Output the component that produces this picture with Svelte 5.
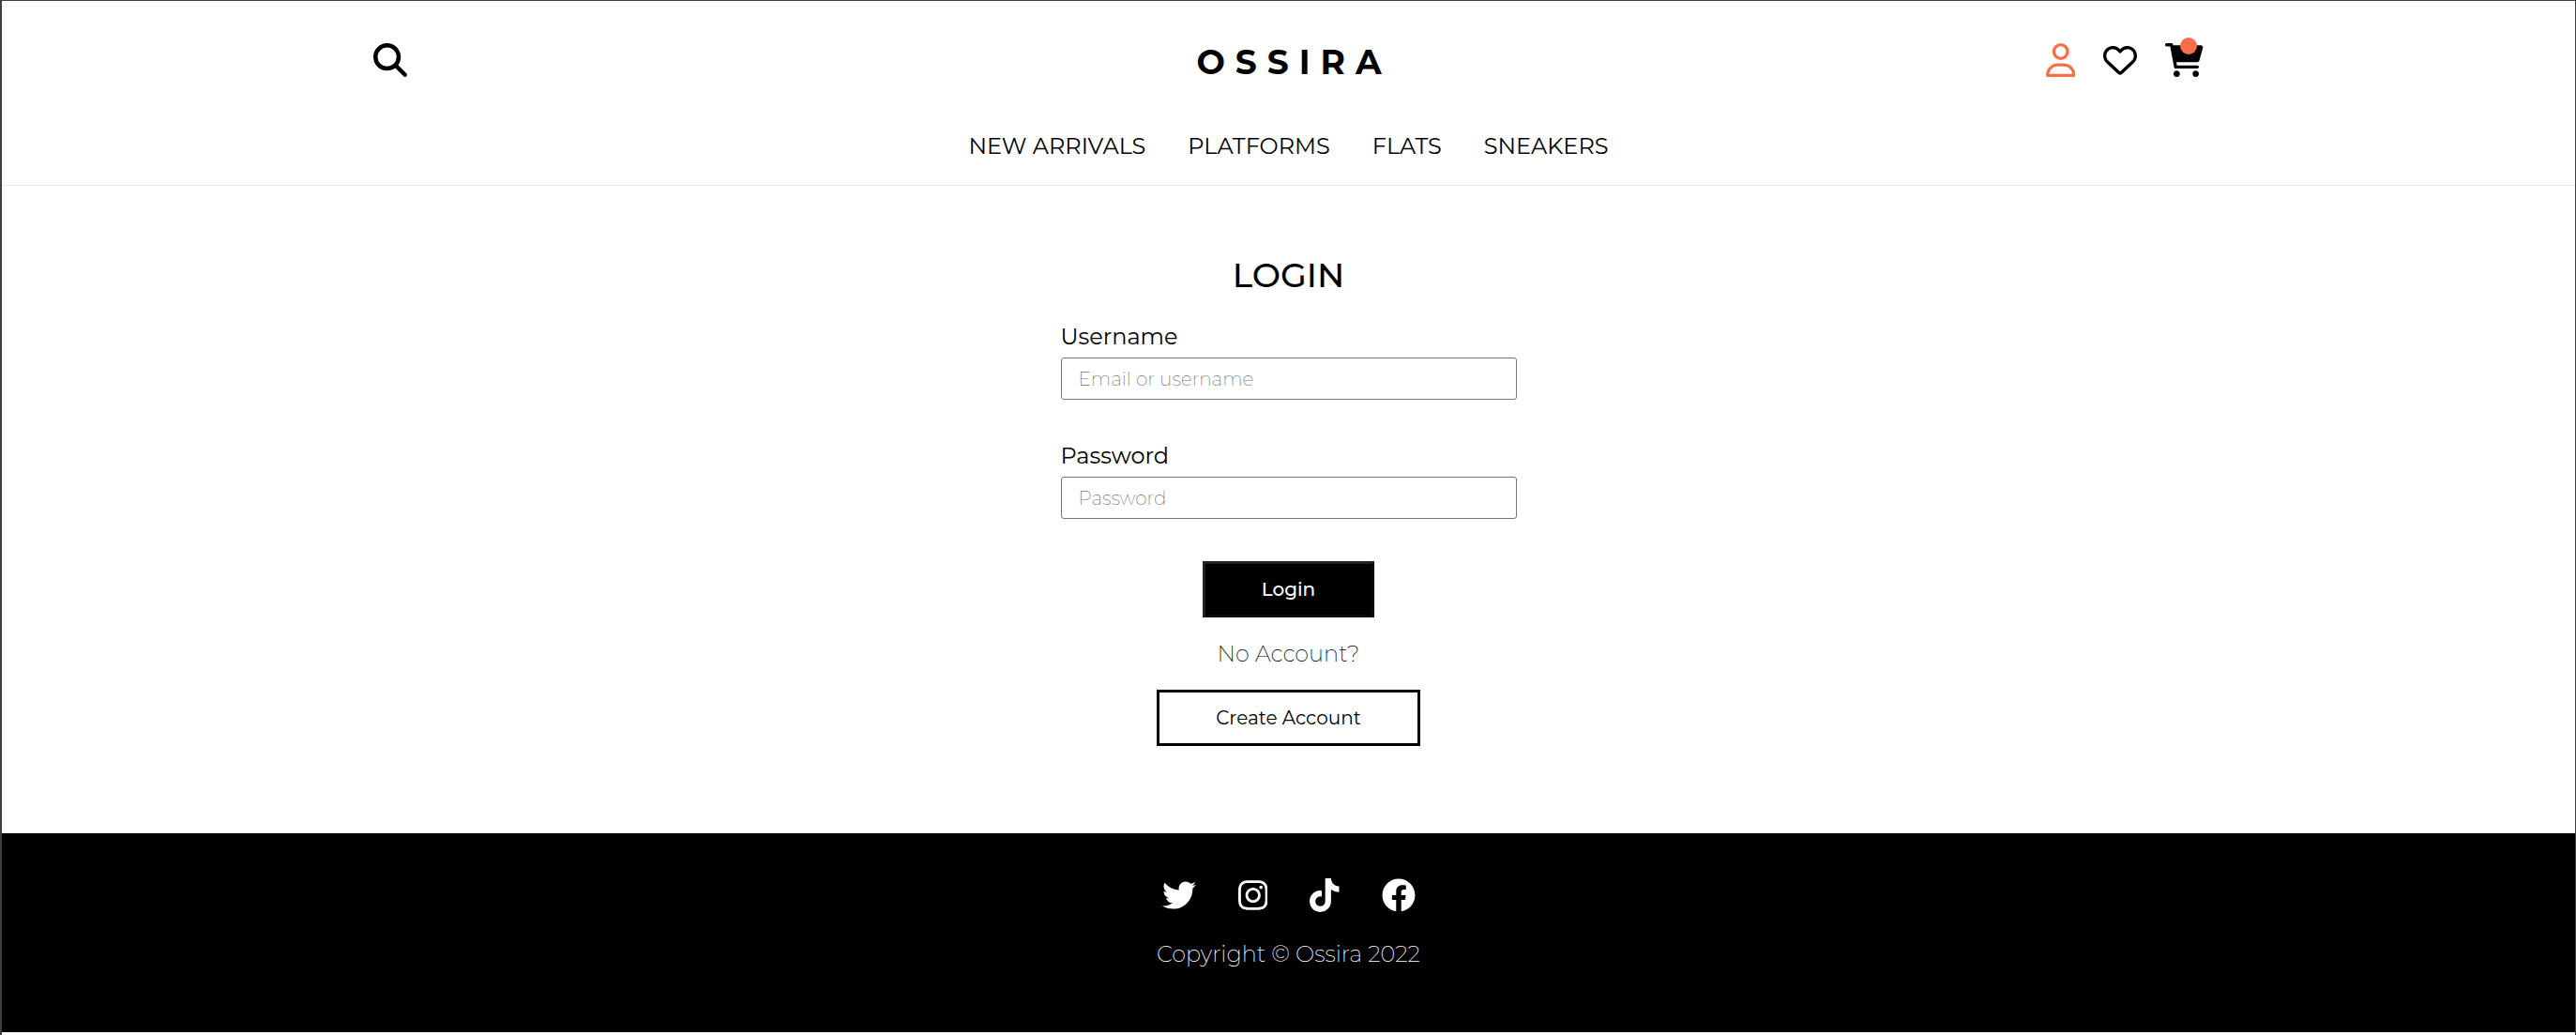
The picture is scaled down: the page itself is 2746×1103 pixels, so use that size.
<script>
  const links = ['NEW ARRIVALS', 'PLATFORMS', 'FLATS', 'SNEAKERS'];

  const socials = [
    {
      name: 'Twitter',
      box: '0 0 512 512',
      path: 'M459.37 151.716c.325 4.548.325 9.097.325 13.645 0 138.72-105.583 298.558-298.558 298.558-59.452 0-114.68-17.219-161.137-47.106 8.447.974 16.568 1.299 25.34 1.299 49.055 0 94.213-16.568 130.274-44.832-46.132-.975-84.792-31.188-98.112-72.772 6.498.974 12.995 1.624 19.818 1.624 9.421 0 18.843-1.3 27.614-3.573-48.081-9.747-84.143-51.98-84.143-102.985v-1.299c13.969 7.797 30.214 12.67 47.431 13.319-28.264-18.843-46.781-51.005-46.781-87.391 0-19.492 5.197-37.36 14.294-52.954 51.655 63.675 129.3 105.258 216.365 109.807-1.624-7.797-2.599-15.918-2.599-24.04 0-57.828 46.782-104.934 104.934-104.934 30.213 0 57.502 12.67 76.67 33.137 23.715-4.548 46.456-13.32 66.599-25.34-7.798 24.366-24.366 44.833-46.132 57.827 21.117-2.273 41.584-8.122 60.426-16.243-14.292 20.791-32.161 39.308-52.628 54.253z'
    },
    {
      name: 'Instagram',
      box: '0 0 448 512',
      path: 'M224.1 141c-63.6 0-114.9 51.3-114.9 114.9s51.3 114.9 114.9 114.9S339 319.5 339 255.9 287.7 141 224.1 141zm0 189.6c-41.1 0-74.7-33.5-74.7-74.7s33.5-74.7 74.7-74.7 74.7 33.5 74.7 74.7-33.6 74.7-74.7 74.7zm146.4-194.3c0 14.9-12 26.8-26.8 26.8-14.9 0-26.8-12-26.8-26.8s12-26.8 26.8-26.8 26.8 12 26.8 26.8zm76.1 27.2c-1.7-35.9-9.9-67.7-36.2-93.9-26.2-26.2-58-34.4-93.9-36.2-37-2.1-147.9-2.1-184.9 0-35.8 1.7-67.6 9.9-93.9 36.1s-34.4 58-36.2 93.9c-2.1 37-2.1 147.9 0 184.9 1.7 35.9 9.9 67.7 36.2 93.9s58 34.4 93.9 36.2c37 2.1 147.9 2.1 184.9 0 35.9-1.7 67.7-9.9 93.9-36.2 26.2-26.2 34.4-58 36.2-93.9 2.1-37 2.1-147.8 0-184.8zM398.8 388c-7.8 19.6-22.9 34.7-42.6 42.6-29.5 11.7-99.5 9-132.1 9s-102.7 2.6-132.1-9c-19.6-7.8-34.7-22.9-42.6-42.6-11.7-29.5-9-99.5-9-132.1s-2.6-102.7 9-132.1c7.8-19.6 22.9-34.7 42.6-42.6 29.5-11.7 99.5-9 132.1-9s102.7-2.6 132.1 9c19.6 7.8 34.7 22.9 42.6 42.6 11.7 29.5 9 99.5 9 132.1s2.7 102.7-9 132.1z'
    },
    {
      name: 'TikTok',
      box: '0 0 448 512',
      path: 'M448,209.91a210.06,210.06,0,0,1-122.77-39.25V349.38A162.55,162.55,0,1,1,185,188.31V278.2a74.62,74.62,0,1,0,52.23,71.18V0l88,0a121.18,121.18,0,0,0,1.86,22.17h0A122.18,122.18,0,0,0,381,102.39a121.43,121.43,0,0,0,67,20.14Z'
    },
    {
      name: 'Facebook',
      box: '0 0 512 512',
      path: 'M504 256C504 119 393 8 256 8S8 119 8 256c0 123.78 90.69 226.38 209.25 245V327.69h-63V256h63v-54.64c0-62.15 37-96.48 93.67-96.48 27.14 0 55.52 4.84 55.52 4.84v61h-31.28c-30.8 0-40.41 19.12-40.41 38.73V256h68.78l-11 71.69h-57.78V501C413.31 482.38 504 379.78 504 256z'
    }
  ];
</script>

<div class="page">
  <header>
    <div class="bar">
      <button class="icon" type="button" aria-label="Search">
        <svg viewBox="0 0 512 512"><path d="M416 208c0 45.9-14.9 88.3-40 122.7L502.6 457.4c12.5 12.5 12.5 32.8 0 45.3s-32.8 12.5-45.3 0L330.7 376c-34.4 25.2-76.8 40-122.7 40C93.1 416 0 322.9 0 208S93.1 0 208 0S416 93.1 416 208zM208 352a144 144 0 1 0 0-288 144 144 0 1 0 0 288z" /></svg>
      </button>
      <a class="logo" href="#home">OSSIRA</a>
      <div class="actions">
        <a class="icon active" href="#account" aria-label="Account">
          <svg viewBox="0 0 448 512"><path d="M304 128a80 80 0 1 0 -160 0 80 80 0 1 0 160 0zM96 128a128 128 0 1 1 256 0A128 128 0 1 1 96 128zM49.3 464H398.7c-8.9-63.3-63.3-112-129-112H178.3c-65.7 0-120.1 48.7-129 112zM0 482.3C0 383.8 79.8 304 178.3 304h91.4C368.2 304 448 383.8 448 482.3c0 16.4-13.3 29.7-29.7 29.7H29.7C13.3 512 0 498.7 0 482.3z" /></svg>
        </a>
        <a class="icon" href="#wishlist" aria-label="Wishlist">
          <svg viewBox="0 0 512 512"><path d="M225.8 468.2l-2.5-2.3L48.1 303.2C17.4 274.7 0 234.7 0 192.8v-3.3c0-70.4 50-130.8 119.2-144C158.6 37.9 198.9 47 231 69.6c9 6.4 17.4 13.8 25 22.3c4.2-4.8 8.7-9.2 13.5-13.3c3.7-3.2 7.5-6.2 11.5-9C313.1 47 353.4 37.9 392.8 45.4C462 58.6 512 119.1 512 189.5v3.3c0 41.9-17.4 81.9-48.1 110.4L288.7 465.9l-2.5 2.3c-8.2 7.6-19 11.9-30.2 11.9s-22-4.2-30.2-11.9zM239.1 145c-.4-.3-.7-.7-1-1.1l-17.8-20c-23.1-25.9-58-37.7-92-31.2C81.6 101.5 48 142.1 48 189.5v3.3c0 28.5 11.9 55.8 32.8 75.2L256 430.7 431.2 268c20.9-19.4 32.8-46.7 32.8-75.2v-3.3c0-47.3-33.6-88-80.1-96.9c-34-6.5-69 5.4-92 31.2l-18 20.3c-.3 .4-.7 .7-1 1.1c-4.5 4.5-10.6 7-16.9 7s-12.4-2.5-16.9-7z" /></svg>
        </a>
        <a class="icon cart" href="#cart" aria-label="Cart">
          <svg viewBox="0 0 576 512"><path d="M96 0C107.5 0 117.4 8.19 119.6 19.51L121.1 32H541.8C562.1 32 578.3 52.25 572.6 72.66L518.6 264.7C514.7 278.5 502.1 288 487.8 288H170.7L179.9 336H488C501.3 336 512 346.7 512 360C512 373.3 501.3 384 488 384H159.1C148.5 384 138.6 375.8 136.4 364.5L76.14 48H24C10.75 48 0 37.25 0 24C0 10.75 10.75 0 24 0H96zM128 464C128 437.5 149.5 416 176 416C202.5 416 224 437.5 224 464C224 490.5 202.5 512 176 512C149.5 512 128 490.5 128 464zM512 464C512 490.5 490.5 512 464 512C437.5 512 416 490.5 416 464C416 437.5 437.5 416 464 416C490.5 416 512 437.5 512 464z" /></svg>
          <span class="badge"></span>
        </a>
      </div>
    </div>
    <nav>
      {#each links as link}
        <a href="#shop">{link}</a>
      {/each}
    </nav>
  </header>

  <main>
    <h1>LOGIN</h1>
    <form onsubmit={(e) => e.preventDefault()}>
      <div class="field">
        <label for="username">Username</label>
        <input id="username" type="text" placeholder="Email or username" />
      </div>
      <div class="field">
        <label for="password">Password</label>
        <input id="password" type="password" placeholder="Password" />
      </div>
      <button class="btn login" type="submit">Login</button>
    </form>
    <p class="prompt">No Account?</p>
    <button class="btn create" type="button">Create Account</button>
  </main>

  <footer>
    <div class="socials">
      {#each socials as s}
        <a class="icon" href="#social" aria-label={s.name}>
          <svg viewBox={s.box}><path d={s.path} /></svg>
        </a>
      {/each}
    </div>
    <p>Copyright © Ossira 2022</p>
  </footer>
</div>

<style>
  :global(body) {
    margin: 0;
    background: #fff;
  }

  .page {
    box-sizing: border-box;
    min-height: 100vh;
    border: solid #404040;
    border-width: 1px 1px 0 2px;
    font-family: Montserrat, Inter, 'Open Sans', sans-serif;
    font-size: 24px;
    line-height: 32px;
    color: #000;
  }

  a {
    color: inherit;
    text-decoration: none;
  }

  header {
    padding: 39px 0 25px;
    border-bottom: 1px solid #e5e5e1;
  }

  .bar {
    display: grid;
    grid-template-columns: 1fr auto 1fr;
    align-items: center;
    width: 71.1%;
    height: 48px;
    margin: 0 auto;
  }

  .icon {
    display: block;
    padding: 0;
    border: 0;
    background: none;
    color: inherit;
    justify-self: start;
    cursor: pointer;
  }

  .icon svg {
    display: block;
    height: 36px;
    fill: currentColor;
  }

  /* Left padding balances the tracking after the last letter. */
  .logo {
    padding: 3px 0 0 12px;
    font-size: 36px;
    font-weight: 700;
    letter-spacing: 11px;
  }

  .actions {
    display: flex;
    justify-content: flex-end;
    gap: 30px;
  }

  .active {
    color: #f97048;
  }

  .cart {
    position: relative;
  }

  .badge {
    position: absolute;
    top: -6px;
    right: 7px;
    width: 18px;
    height: 18px;
    border-radius: 50%;
    background: #f97048;
  }

  nav {
    display: flex;
    justify-content: center;
    gap: 45px;
    margin-top: 52px;
  }

  main {
    display: flex;
    flex-direction: column;
    align-items: center;
    padding: 73px 0 93px;
  }

  h1 {
    margin: 0 0 28px;
    font-size: 36px;
    font-weight: 500;
    line-height: 44px;
  }

  form {
    display: flex;
    flex-direction: column;
    align-items: center;
    gap: 45px;
    width: 486px;
    max-width: 100%;
  }

  .field {
    display: flex;
    flex-direction: column;
    gap: 6px;
    width: 100%;
  }

  .field + .field {
    margin-top: -1px;
  }

  input {
    box-sizing: border-box;
    width: 100%;
    height: 45px;
    padding: 0 18px;
    border: 1px solid #767676;
    border-radius: 3px;
    font: inherit;
    font-size: 20px;
    font-weight: 300;
  }

  input::placeholder {
    color: #757575;
    font-weight: 200;
  }

  .btn {
    height: 60px;
    padding: 0 60px;
    font: inherit;
    font-size: 20px;
    cursor: pointer;
  }

  .login {
    border: 3px solid;
    border-color: #222 #080808 #080808 #222;
    background: #000;
    color: #fff;
    font-weight: 500;
  }

  .create {
    border: 3px solid #000;
    background: #fff;
    color: #000;
  }

  .prompt {
    margin: 23px 0 22px;
    font-weight: 200;
  }

  footer {
    display: flex;
    flex-direction: column;
    align-items: center;
    gap: 29px;
    padding: 48px 0 67px;
    background: #000;
    color: #fff;
    font-weight: 200;
  }

  .socials {
    display: flex;
    gap: 45px;
  }

  footer p {
    margin: 0;
  }
</style>
